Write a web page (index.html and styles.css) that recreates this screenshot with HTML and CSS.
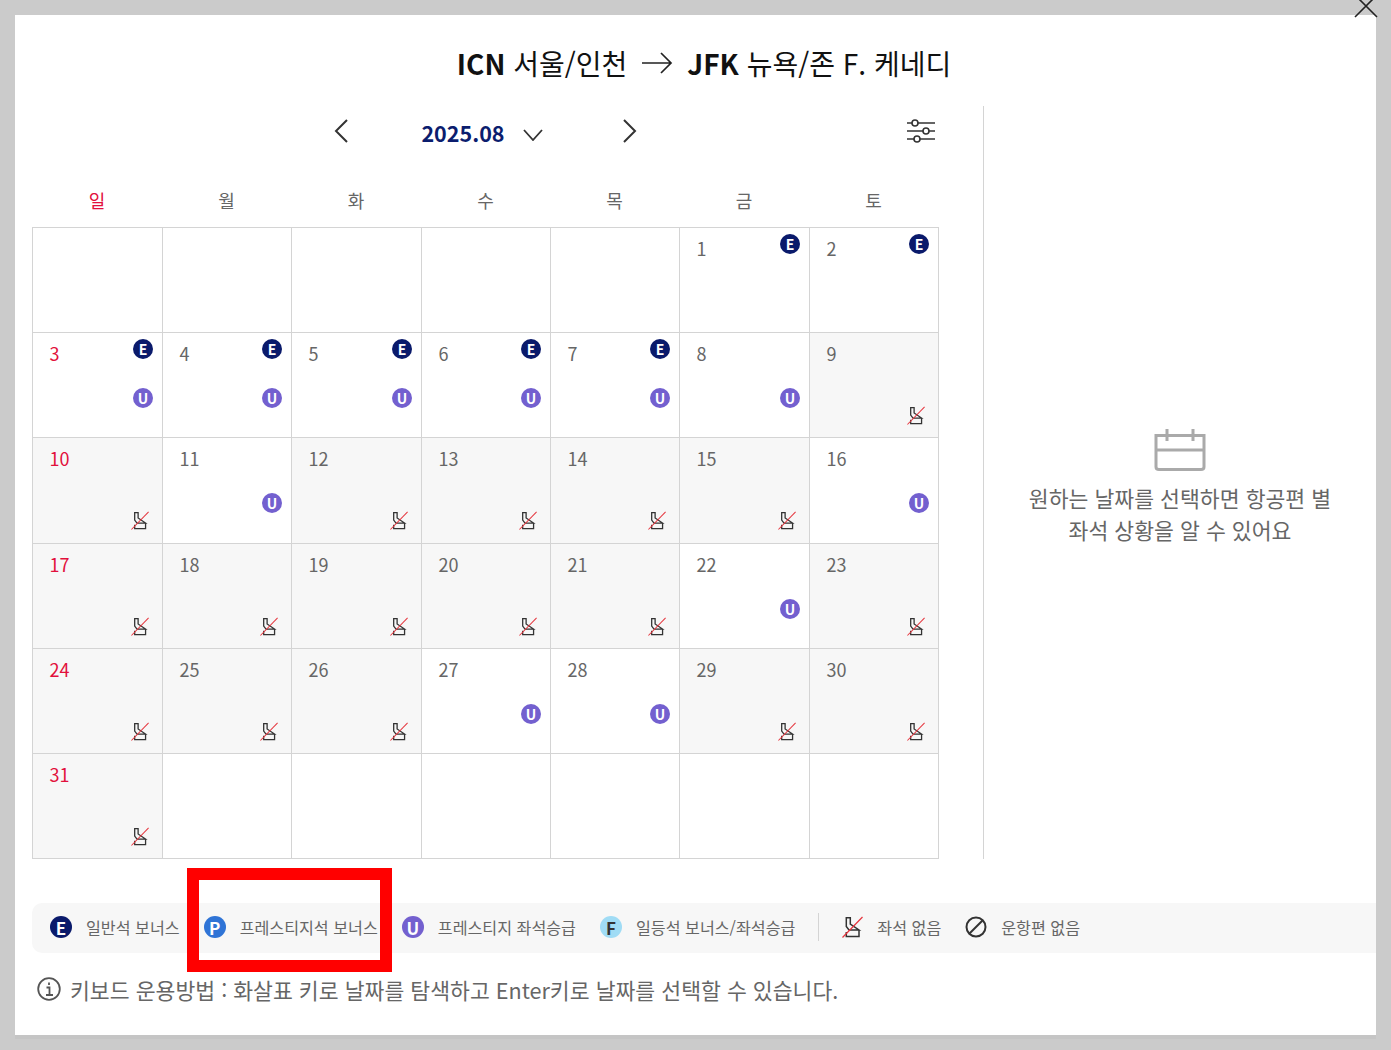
FILE: index.html
```html
<!DOCTYPE html>
<html lang="ko">
<head>
    <meta charset="UTF-8">
    <title>달력</title>
    <link rel="stylesheet" href="styles.css">
</head>
<body>
    <svg class="sprites" width="0" height="0">
        <symbol id="seat" viewBox="0 0 21 22">
            <path d="M4.3 1.7H8.3V8L17 14H7L4.3 10.5ZM4.3 16V20.5H17V14" fill="none" stroke="#333" stroke-width="1.5"/>
            <path d="M.5 21.5L20.5 1" stroke="#e5343c" stroke-width="1.2"/>
        </symbol>
    </svg>

    <div class="modal">
        <svg class="close" width="24" height="24" viewBox="0 0 24 24"><path d="M1 23L23 1M1 1L23 23" stroke="#222" stroke-width="1.6"/></svg>

        <h1 class="title">
            <span><b>ICN</b> 서울/인천</span>
            <svg width="32" height="24" viewBox="0 0 32 24"><path d="M1 12H30M20 2L30 12L20 22" fill="none" stroke="#222" stroke-width="1.7"/></svg>
            <span><b>JFK</b> 뉴욕/존 F. 케네디</span>
        </h1>

        <div class="main">
            <div class="calendar">
                <div class="month-nav">
                    <div></div>
                    <div class="month-center">
                        <svg width="14" height="24" viewBox="0 0 14 24"><path d="M13 1L2 12L13 23" fill="none" stroke="#333" stroke-width="2"/></svg>
                        <div class="month-label">2025.08
                            <svg class="month-caret" width="20" height="12" viewBox="0 0 20 12"><path d="M1 1L10 11L19 1" fill="none" stroke="#333" stroke-width="1.8"/></svg>
                        </div>
                        <svg class="month-next" width="14" height="24" viewBox="0 0 14 24"><path d="M1 1L12 12L1 23" fill="none" stroke="#333" stroke-width="2"/></svg>
                    </div>
                    <svg class="filter" width="28" height="24" viewBox="0 0 28 24">
                        <g fill="#fff" stroke="#333" stroke-width="1.6">
                            <path d="M0 4H28M0 12H28M0 20H28"/>
                            <circle cx="8" cy="4" r="3"/>
                            <circle cx="19" cy="12" r="3"/>
                            <circle cx="10" cy="20" r="3"/>
                        </g>
                    </svg>
                </div>

                <div class="week">
                    <div class="sun">일</div><div>월</div><div>화</div><div>수</div><div>목</div><div>금</div><div>토</div>
                </div>

                <div class="days">
                    <div class="cell"></div>
                    <div class="cell"></div>
                    <div class="cell"></div>
                    <div class="cell"></div>
                    <div class="cell"></div>
                    <div class="cell"><div class="head"><span class="date">1</span><span class="badge e">E</span></div></div>
                    <div class="cell"><div class="head"><span class="date">2</span><span class="badge e">E</span></div></div>

                    <div class="cell"><div class="head"><span class="date sun">3</span><span class="badge e">E</span></div><span class="badge u low">U</span></div>
                    <div class="cell"><div class="head"><span class="date">4</span><span class="badge e">E</span></div><span class="badge u low">U</span></div>
                    <div class="cell"><div class="head"><span class="date">5</span><span class="badge e">E</span></div><span class="badge u low">U</span></div>
                    <div class="cell"><div class="head"><span class="date">6</span><span class="badge e">E</span></div><span class="badge u low">U</span></div>
                    <div class="cell"><div class="head"><span class="date">7</span><span class="badge e">E</span></div><span class="badge u low">U</span></div>
                    <div class="cell"><div class="head"><span class="date">8</span></div><span class="badge u low">U</span></div>
                    <div class="cell none"><div class="head"><span class="date">9</span></div><svg class="no-seat"><use href="#seat"/></svg></div>

                    <div class="cell none"><div class="head"><span class="date sun">10</span></div><svg class="no-seat"><use href="#seat"/></svg></div>
                    <div class="cell"><div class="head"><span class="date">11</span></div><span class="badge u low">U</span></div>
                    <div class="cell none"><div class="head"><span class="date">12</span></div><svg class="no-seat"><use href="#seat"/></svg></div>
                    <div class="cell none"><div class="head"><span class="date">13</span></div><svg class="no-seat"><use href="#seat"/></svg></div>
                    <div class="cell none"><div class="head"><span class="date">14</span></div><svg class="no-seat"><use href="#seat"/></svg></div>
                    <div class="cell none"><div class="head"><span class="date">15</span></div><svg class="no-seat"><use href="#seat"/></svg></div>
                    <div class="cell"><div class="head"><span class="date">16</span></div><span class="badge u low">U</span></div>

                    <div class="cell none"><div class="head"><span class="date sun">17</span></div><svg class="no-seat"><use href="#seat"/></svg></div>
                    <div class="cell none"><div class="head"><span class="date">18</span></div><svg class="no-seat"><use href="#seat"/></svg></div>
                    <div class="cell none"><div class="head"><span class="date">19</span></div><svg class="no-seat"><use href="#seat"/></svg></div>
                    <div class="cell none"><div class="head"><span class="date">20</span></div><svg class="no-seat"><use href="#seat"/></svg></div>
                    <div class="cell none"><div class="head"><span class="date">21</span></div><svg class="no-seat"><use href="#seat"/></svg></div>
                    <div class="cell"><div class="head"><span class="date">22</span></div><span class="badge u low">U</span></div>
                    <div class="cell none"><div class="head"><span class="date">23</span></div><svg class="no-seat"><use href="#seat"/></svg></div>

                    <div class="cell none"><div class="head"><span class="date sun">24</span></div><svg class="no-seat"><use href="#seat"/></svg></div>
                    <div class="cell none"><div class="head"><span class="date">25</span></div><svg class="no-seat"><use href="#seat"/></svg></div>
                    <div class="cell none"><div class="head"><span class="date">26</span></div><svg class="no-seat"><use href="#seat"/></svg></div>
                    <div class="cell"><div class="head"><span class="date">27</span></div><span class="badge u low">U</span></div>
                    <div class="cell"><div class="head"><span class="date">28</span></div><span class="badge u low">U</span></div>
                    <div class="cell none"><div class="head"><span class="date">29</span></div><svg class="no-seat"><use href="#seat"/></svg></div>
                    <div class="cell none"><div class="head"><span class="date">30</span></div><svg class="no-seat"><use href="#seat"/></svg></div>

                    <div class="cell none"><div class="head"><span class="date sun">31</span></div><svg class="no-seat"><use href="#seat"/></svg></div>
                    <div class="cell"></div>
                    <div class="cell"></div>
                    <div class="cell"></div>
                    <div class="cell"></div>
                    <div class="cell"></div>
                    <div class="cell"></div>
                </div>
            </div>

            <div class="side">
                <svg width="52" height="42" viewBox="0 0 52 42">
                    <path d="M2 6.5H50V38C50 39.5 49 40.5 47 40.5H5C3 40.5 2 39.5 2 38ZM2 21H50M13 0V12M39 0V12" fill="none" stroke="#aaa" stroke-width="3"/>
                </svg>
                <p>원하는 날짜를 선택하면 항공편 별<br>좌석 상황을 알 수 있어요</p>
            </div>
        </div>

        <div class="legend">
            <div class="legend-item"><span class="badge big e">E</span>일반석 보너스</div>
            <div class="legend-item"><span class="badge big p">P</span>프레스티지석 보너스</div>
            <div class="legend-item"><span class="badge big u">U</span>프레스티지 좌석승급</div>
            <div class="legend-item"><span class="badge big f">F</span>일등석 보너스/좌석승급</div>
            <div class="legend-sep"></div>
            <div class="legend-item"><svg class="legend-seat"><use href="#seat"/></svg>좌석 없음</div>
            <div class="legend-item">
                <svg width="22" height="22" viewBox="0 0 22 22"><circle cx="11" cy="11" r="9.5" fill="none" stroke="#333" stroke-width="2"/><path d="M4.5 17.5L17.5 4.5" stroke="#333" stroke-width="2"/></svg>
                운항편 없음
            </div>
        </div>

        <div class="note">
            <svg width="24" height="24" viewBox="0 0 24 24">
                <circle cx="12" cy="12" r="10.8" fill="none" stroke="#555" stroke-width="1.8"/>
                <path d="M12 5.5V8M9.5 10.5H12.5V18M9 18H16" fill="none" stroke="#555" stroke-width="1.8"/>
            </svg>
            키보드 운용방법 : 화살표 키로 날짜를 탐색하고 Enter키로 날짜를 선택할 수 있습니다.
        </div>
    </div>

    <div class="highlight"></div>
</body>
</html>
```

FILE: styles.css
```css
* {
    box-sizing: border-box;
}
body {
    margin: 0;
    height: 1050px;
    overflow: hidden;
    background: #cbcbcb;
    font-family: "Noto Sans CJK KR", "Noto Sans", sans-serif;
    color: #666;
}
.sprites {
    position: absolute;
}
.modal {
    position: relative;
    width: 1361px;
    height: 1020px;
    margin: 15px 0 0 15px;
    padding-top: 27px;
    background: #fff;
    box-shadow: 0 4px 0 #c5c5c5;
}
.close {
    position: absolute;
    top: -21px;
    right: -2px;
}
.title {
    display: flex;
    justify-content: center;
    align-items: center;
    gap: 14px;
    height: 42px;
    margin: 0 0 22px;
    padding-left: 17px;
    font-size: 28px;
    font-weight: 400;
    color: #111;
}
.title b {
    font-weight: 700;
}
.main {
    display: flex;
    height: 753px;
    padding-left: 17px;
}
.calendar {
    width: 907px;
}
.month-nav {
    display: grid;
    grid-template-columns: 1fr auto 1fr;
    align-items: center;
    height: 50px;
}
.month-center {
    display: flex;
    align-items: center;
    gap: 73px;
}
.month-label {
    display: flex;
    align-items: center;
    gap: 18px;
    padding-top: 2px;
    font-size: 21.5px;
    font-weight: 700;
    color: #0b1d6e;
}
.month-caret {
    margin-top: 6px;
}
.month-next {
    margin-left: 7px;
}
.filter {
    justify-self: end;
    margin-right: 4px;
}
.week {
    display: grid;
    grid-template-columns: 130px 129px 130px 129px 129px 130px 129px;
    height: 71px;
    padding-top: 29px;
    font-size: 18px;
    line-height: 30px;
    text-align: center;
}
.sun {
    color: #e2103c;
}
.days {
    display: grid;
    grid-template-columns: 130px 129px 130px 129px 129px 130px 129px;
    grid-template-rows: 105px 105px 106px 105px 105px 105px;
    height: 632px;
    border-top: 1px solid #d4d4d4;
    border-left: 1px solid #d4d4d4;
}
.cell {
    display: flex;
    flex-direction: column;
    padding: 6px 9px 0 16.5px;
    border-right: 1px solid #d4d4d4;
    border-bottom: 1px solid #d4d4d4;
}
.cell.none {
    background: #f7f7f7;
}
.head {
    display: flex;
    justify-content: space-between;
    height: 20px;
}
.date {
    font-size: 18px;
    line-height: 28px;
}
.badge {
    display: flex;
    justify-content: center;
    align-items: center;
    flex: none;
    width: 20px;
    height: 20px;
    margin-left: auto;
    border-radius: 50%;
    font-size: 14px;
    font-weight: 700;
    color: #fff;
}
.badge.low {
    margin-top: 29px;
}
.badge.big {
    width: 22px;
    height: 22px;
    margin: 0;
    font-size: 17px;
}
.badge.e {
    background: #0a1a6b;
}
.badge.u {
    background: #7360cf;
}
.badge.p {
    background: #2f74d6;
}
.badge.f {
    background: #a0dcf5;
    color: #333;
}
.no-seat {
    width: 18px;
    height: 19px;
    margin: 47px 4px 0 auto;
}
.side {
    display: flex;
    flex-direction: column;
    align-items: center;
    width: 393px;
    margin-left: 44px;
    padding-top: 323px;
    border-left: 1px solid #d4d4d4;
}
.side p {
    margin: 11px 0 0;
    font-size: 21.6px;
    line-height: 32px;
    text-align: center;
    color: #666;
}
.legend {
    display: flex;
    align-items: center;
    gap: 24px;
    height: 50px;
    margin: 44px 0 0 17px;
    padding: 0 0 2px 18px;
    background: #f7f7f7;
    border-radius: 10px 0 0 10px;
    font-size: 16.15px;
}
.legend-item {
    display: flex;
    align-items: center;
    gap: 14px;
    white-space: nowrap;
}
.legend-sep {
    width: 1px;
    height: 28px;
    margin: 0 -1px;
    background: #d4d4d4;
}
.legend-seat {
    width: 21px;
    height: 22px;
}
.note {
    display: flex;
    align-items: center;
    gap: 9px;
    height: 32px;
    margin: 20px 0 0 22px;
    font-size: 21.6px;
}
.highlight {
    position: absolute;
    left: 187px;
    top: 868px;
    width: 205px;
    height: 104px;
    border: 12px solid #f00;
}
```
